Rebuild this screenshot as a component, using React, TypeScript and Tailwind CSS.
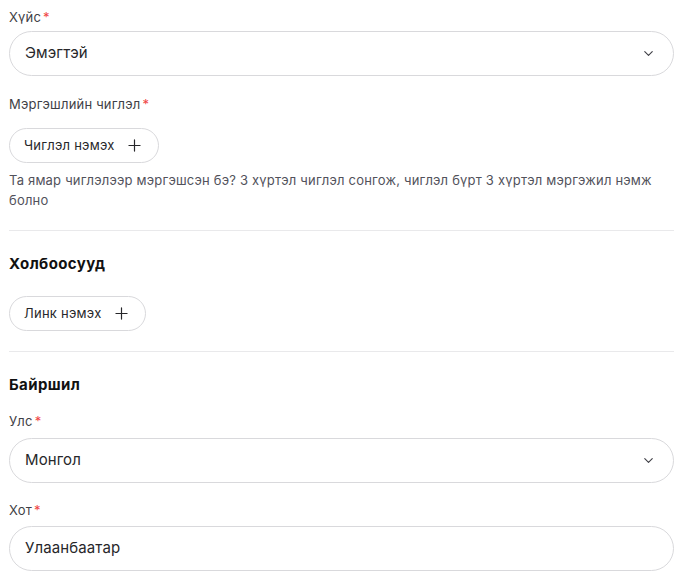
import { ChevronDown, Plus } from 'lucide-react'

function Label({ text }: { text: string }) {
  return (
    <div className="text-[13px] leading-5 tracking-[0.2px] text-[#3f3f46]">
      {text}
      <span className="ml-0.5 text-[#ef4444]">*</span>
    </div>
  )
}

function SelectBox({ value }: { value: string }) {
  return (
    <div className="flex h-[45px] items-center justify-between rounded-full border border-[#d9d9dc] bg-white pl-[15px] pr-[17px]">
      <span className="text-[15px] tracking-[0.1px] text-[#27272a]">{value}</span>
      <ChevronDown size={15} strokeWidth={1.8} className="text-[#3f3f46]" />
    </div>
  )
}

function AddButton({ text }: { text: string }) {
  return (
    <button className="flex h-[35px] items-center gap-2.5 rounded-full border border-[#d9d9dc] bg-white pl-[14px] pr-[14px] text-[13px] tracking-[0.25px] text-[#27272a]">
      {text}
      <Plus size={19} strokeWidth={1.5} className="text-[#27272a]" />
    </button>
  )
}

export default function App() {
  return (
    <div
      className="min-h-screen bg-white"
      style={{ fontFamily: 'Inter, "Noto Sans", sans-serif' }}
    >
      <div className="ml-[9px] w-[665px] pt-[7px]">
        <Label text="Хүйс" />
        <div className="mt-[4px]">
          <SelectBox value="Эмэгтэй" />
        </div>

        <div className="mt-[18px]">
          <Label text="Мэргэшлийн чиглэл" />
        </div>
        <div className="mt-[14px]">
          <AddButton text="Чиглэл нэмэх" />
        </div>
        <p className="mt-[7px] text-[13px] leading-5 tracking-[0.2px] text-[#52525b]">
          Та ямар чиглэлээр мэргэшсэн бэ? 3 хүртэл чиглэл сонгож, чиглэл бүрт 3 хүртэл мэргэжил нэмж болно
        </p>

        <div className="mt-[20px] h-px bg-[#e9e9eb]" />

        <h3 className="mt-[21px] text-[15px] font-bold leading-6 tracking-[0.4px] text-[#111]">Холбоосууд</h3>
        <div className="mt-[20px]">
          <AddButton text="Линк нэмэх" />
        </div>

        <div className="mt-[20px] h-px bg-[#e9e9eb]" />

        <h3 className="mt-[21px] text-[15px] font-bold leading-6 tracking-[0.4px] text-[#111]">Байршил</h3>
        <div className="mt-[14px]">
          <Label text="Улс" />
        </div>
        <div className="mt-[7px]">
          <SelectBox value="Монгол" />
        </div>

        <div className="mt-[17px]">
          <Label text="Хот" />
        </div>
        <div className="mt-[6px] flex h-[45px] items-center rounded-full border border-[#d9d9dc] bg-white pl-[15px]">
          <span className="text-[15px] tracking-[0.1px] text-[#27272a]">Улаанбаатар</span>
        </div>
      </div>
    </div>
  )
}
